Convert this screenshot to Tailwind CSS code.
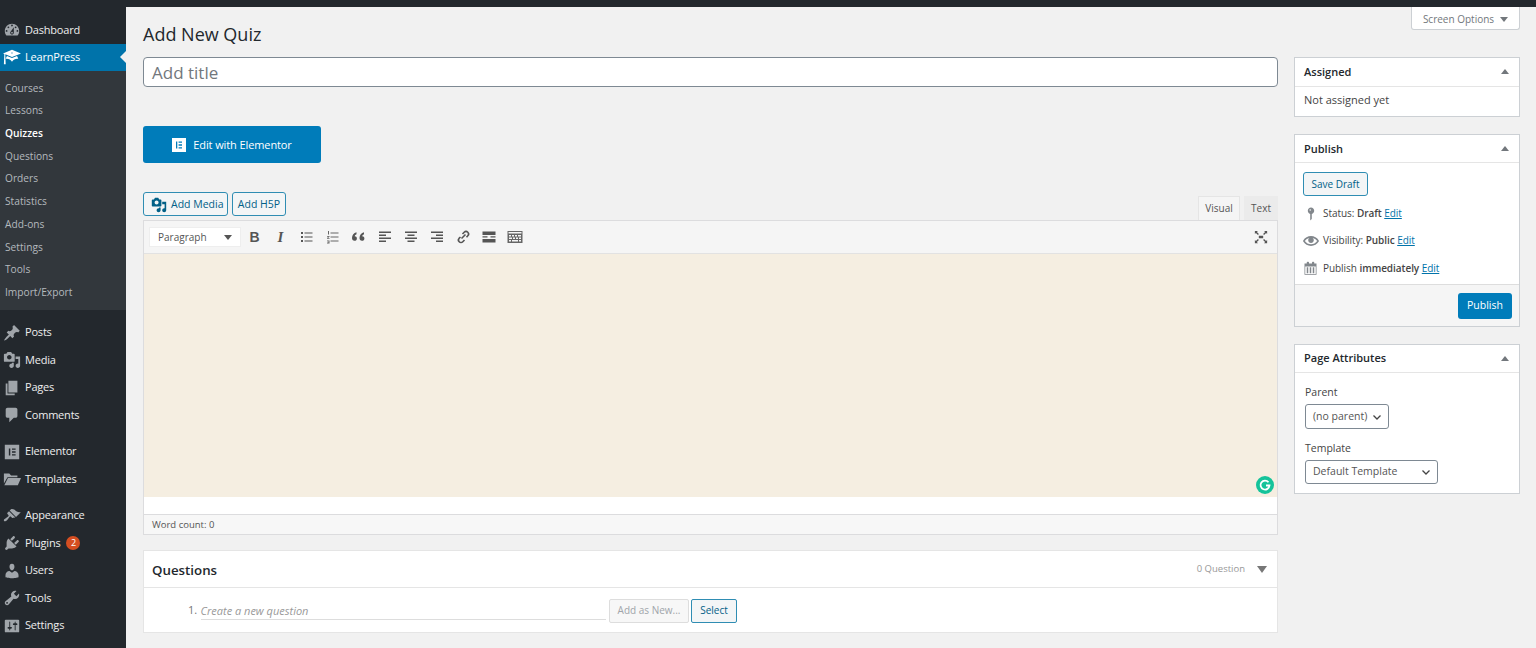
<!DOCTYPE html>
<html lang="en">
<head>
    <meta charset="UTF-8">
    <meta name="viewport" content="width=device-width, initial-scale=1.0">
    <title>Add New Quiz</title>
    <script src="https://cdn.jsdelivr.net/npm/@tailwindcss/browser@4"></script>
</head>
<body class="bg-[#f1f1f1] h-[648px] overflow-hidden font-['Open_Sans',sans-serif] text-[11px] text-[#444]">
    <!-- admin bar -->
    <div class="h-[7px] bg-[#23282d]"></div>

    <div class="flex h-[641px]">
        <!-- sidebar -->
        <nav class="w-[126px] shrink-0 bg-[#23282d] pt-[9.5px] text-[#eee] tracking-[-0.2px]">
            <a class="flex items-center h-[27px] pl-[3px] gap-[4px]">
                <svg class="w-[18px] h-[18px] fill-[#a0a5aa]" viewBox="0 0 20 20"><path d="M3.76 16h12.48c1.1-1.37 1.76-3.11 1.76-5 0-4.42-3.58-8-8-8s-8 3.58-8 8c0 1.89.66 3.63 1.76 5zM10 4c.55 0 1 .45 1 1s-.45 1-1 1-1-.45-1-1 .45-1 1-1zM6 6c.55 0 1 .45 1 1s-.45 1-1 1-1-.45-1-1 .45-1 1-1zm8 0c.55 0 1 .45 1 1s-.45 1-1 1-1-.45-1-1 .45-1 1-1zm-5.37 5.55L12 7v6c0 1.1-.9 2-2 2s-2-.9-2-2c0-.57.24-1.08.63-1.45zM4 10c.55 0 1 .45 1 1s-.45 1-1 1-1-.45-1-1 .45-1 1-1zm12 0c.55 0 1 .45 1 1s-.45 1-1 1-1-.45-1-1 .45-1 1-1zm-5 3c0-.55-.45-1-1-1s-1 .45-1 1 .45 1 1 1 1-.45 1-1z"/></svg>
                <span>Dashboard</span>
            </a>
            <a class="relative flex items-center h-[27px] pl-[3px] gap-[4px] bg-[#0073aa] text-white">
                <svg class="w-[18px] h-[18px] fill-white" viewBox="0 0 20 20"><path d="M10 10L2.54 7.02 3 18H1l.48-11.41L0 6l10-4 10 4zm0-5c-.55 0-1 .22-1 .5s.45.5 1 .5 1-.22 1-.5-.45-.5-1-.5zm0 6l5.57-2.23c.71.94 1.2 2.07 1.36 3.3-.3-.04-.61-.07-.93-.07-2.55 0-4.78 1.37-6 3.41C8.78 13.37 6.55 12 4 12c-.32 0-.63.03-.93.07.16-1.23.65-2.36 1.36-3.3z"/></svg>
                <span>LearnPress</span>
                <span class="absolute right-0 top-[7px] border-y-[6.5px] border-r-[6.5px] border-y-transparent border-r-[#f1f1f1]"></span>
            </a>
            <div class="bg-[#32373c] pt-[6.5px] pb-[6px] text-[10.2px] text-[#b4b9be] tracking-normal">
                <a class="flex items-center h-[22.7px] pl-[5px]">Courses</a>
                <a class="flex items-center h-[22.7px] pl-[5px]">Lessons</a>
                <a class="flex items-center h-[22.7px] pl-[5px] font-semibold text-white">Quizzes</a>
                <a class="flex items-center h-[22.7px] pl-[5px]">Questions</a>
                <a class="flex items-center h-[22.7px] pl-[5px]">Orders</a>
                <a class="flex items-center h-[22.7px] pl-[5px]">Statistics</a>
                <a class="flex items-center h-[22.7px] pl-[5px]">Add-ons</a>
                <a class="flex items-center h-[22.7px] pl-[5px]">Settings</a>
                <a class="flex items-center h-[22.7px] pl-[5px]">Tools</a>
                <a class="flex items-center h-[22.7px] pl-[5px]">Import/Export</a>
            </div>
            <div class="mt-[9px]">
                <a class="flex items-center h-[27.5px] pl-[3px] gap-[4px]">
                    <svg class="w-[18px] h-[18px] fill-[#a0a5aa]" viewBox="0 0 20 20"><path d="M10.44 3.02l1.82-1.82 6.36 6.35-1.83 1.82c-1.05-.68-2.48-.57-3.41.36l-.75.75c-.92.93-1.04 2.35-.35 3.41l-1.83 1.82-2.41-2.41-2.8 2.79c-.42.42-3.38 2.71-3.8 2.29s1.86-3.39 2.28-3.81l2.79-2.79L4.1 9.36l1.83-1.82c1.05.69 2.48.57 3.4-.36l.75-.75c.93-.92 1.05-2.35.36-3.41z"/></svg>
                    <span>Posts</span>
                </a>
                <a class="flex items-center h-[27.5px] pl-[3px] gap-[4px]">
                    <svg class="w-[18px] h-[18px] fill-[#a0a5aa]" viewBox="0 0 20 20"><path d="M13 11V4c0-.55-.45-1-1-1h-1.67L9 1H5L3.67 3H2c-.55 0-1 .45-1 1v7c0 .55.45 1 1 1h10c.55 0 1-.45 1-1zM7 4.5c1.38 0 2.5 1.12 2.5 2.5S8.38 9.5 7 9.5 4.5 8.38 4.5 7 5.62 4.5 7 4.5zM14 6h5v10.5c0 1.38-1.12 2.5-2.5 2.5S14 17.88 14 16.5s1.12-2.5 2.5-2.5c.17 0 .34.02.5.05V9h-3V6zm-4 8.05V13h2v3.5c0 1.38-1.12 2.5-2.5 2.5S7 17.88 7 16.5 8.12 14 9.5 14c.17 0 .34.02.5.05z"/></svg>
                    <span>Media</span>
                </a>
                <a class="flex items-center h-[27.5px] pl-[3px] gap-[4px]">
                    <svg class="w-[18px] h-[18px] fill-[#a0a5aa]" viewBox="0 0 20 20"><path d="M6 15V2h10v13H6zm-1 1h8v2H3V5h2v11z"/></svg>
                    <span>Pages</span>
                </a>
                <a class="flex items-center h-[27.5px] pl-[3px] gap-[4px]">
                    <svg class="w-[18px] h-[18px] fill-[#a0a5aa]" viewBox="0 0 20 20"><path d="M5 2h9c1.1 0 2 .9 2 2v7c0 1.1-.9 2-2 2h-2l-5 5v-5H5c-1.1 0-2-.9-2-2V4c0-1.1.9-2 2-2z"/></svg>
                    <span>Comments</span>
                </a>
            </div>
            <div class="mt-[9px]">
                <a class="flex items-center h-[27.5px] pl-[3px] gap-[4px]">
                    <svg class="w-[18px] h-[18px] fill-[#a0a5aa]" viewBox="0 0 20 20"><path fill-rule="evenodd" d="M2 2h16v16H2zM6.5 6v8h1.6V6zM10 6v1.600h4V6zM10 9.200v1.600h4V9.200zM10 12.400V14h4v-1.600z"/></svg>
                    <span>Elementor</span>
                </a>
                <a class="flex items-center h-[27.5px] pl-[3px] gap-[4px]">
                    <svg class="w-[18px] h-[18px] fill-[#a0a5aa]" viewBox="0 0 20 20"><path d="M1 4h6l2 2h7v2H5L1 15zM5.500 9H20l-3.500 8H1.500z"/></svg>
                    <span>Templates</span>
                </a>
            </div>
            <div class="mt-[9px]">
                <a class="flex items-center h-[27.5px] pl-[3px] gap-[4px]">
                    <svg class="w-[18px] h-[18px] fill-[#a0a5aa]" viewBox="0 0 20 20"><path d="M14.48 11.06L7.41 3.99l1.5-1.5c.5-.56 2.3-.47 3.51.32 1.21.8 1.43 1.28 2.91 2.1 1.18.64 2.45 1.26 4.45.85zm-.71.71L6.7 4.7 4.93 6.47c-.39.39-.39 1.02 0 1.41l1.06 1.06c.39.39.39 1.03 0 1.42-.6.6-1.43 1.11-2.21 1.69-.35.26-.7.53-1.01.84C1.43 13.23.4 14.85 1.19 15.64c.79.79 2.41-.24 3.75-1.58.31-.31.58-.66.84-1.01.58-.78 1.09-1.61 1.69-2.21.39-.39 1.02-.39 1.41 0l1.06 1.06c.39.39 1.02.39 1.41 0z"/></svg>
                    <span>Appearance</span>
                </a>
                <a class="flex items-center h-[27.5px] pl-[3px] gap-[4px]">
                    <svg class="w-[18px] h-[18px] fill-[#a0a5aa]" viewBox="0 0 20 20"><path d="M13.11 4.36L9.87 7.6 8 5.73l3.24-3.24c.35-.34 1.05-.2 1.56.32.52.51.66 1.21.31 1.55zm-8 1.77l.91-1.12 9.01 9.01-1.19.84c-.71.71-2.63 1.16-3.82 1.16H6.14L4.9 17.26c-.59.59-1.54.59-2.12 0-.59-.58-.59-1.53 0-2.12l1.24-1.24v-3.88c0-1.13.4-3.19 1.09-3.89zm7.26 3.97l3.24-3.24c.34-.35 1.04-.21 1.55.31.52.51.66 1.21.31 1.55l-3.24 3.25z"/></svg>
                    <span>Plugins</span>
                    <span class="flex items-center justify-center w-[14px] h-[14px] ml-[2px] rounded-full bg-[#d54e21] text-white text-[9px]">2</span>
                </a>
                <a class="flex items-center h-[27.5px] pl-[3px] gap-[4px]">
                    <svg class="w-[18px] h-[18px] fill-[#a0a5aa]" viewBox="0 0 20 20"><path d="M10 9.25c-2.27 0-2.73-3.44-2.73-3.44C7 4.02 7.82 2 9.97 2c2.16 0 2.98 2.02 2.71 3.81 0 0-.41 3.44-2.68 3.44zm0 2.57L12.72 10c2.39 0 4.52 2.33 4.52 4.53v2.49s-3.65 1.13-7.24 1.13c-3.65 0-7.24-1.13-7.24-1.13v-2.49c0-2.25 1.94-4.48 4.47-4.48z"/></svg>
                    <span>Users</span>
                </a>
                <a class="flex items-center h-[27.5px] pl-[3px] gap-[4px]">
                    <svg class="w-[18px] h-[18px] fill-[#a0a5aa]" viewBox="0 0 20 20"><path d="M16.68 9.77c-1.34 1.34-3.3 1.67-4.95.99l-5.41 6.52c-.99.99-2.59.99-3.58 0s-.99-2.59 0-3.57l6.52-5.42c-.68-1.65-.35-3.61.99-4.95 1.28-1.28 3.12-1.62 4.72-1.06l-2.89 2.89 2.82 2.82 2.86-2.87c.53 1.58.18 3.39-1.08 4.65zM3.81 16.21c.4.39 1.04.39 1.43 0 .4-.4.4-1.04 0-1.43-.39-.4-1.03-.4-1.43 0-.39.39-.39 1.03 0 1.43z"/></svg>
                    <span>Tools</span>
                </a>
                <a class="flex items-center h-[27.5px] pl-[3px] gap-[4px]">
                    <svg class="w-[18px] h-[18px] fill-[#a0a5aa]" viewBox="0 0 20 20"><path d="M18 16V4c0-.55-.45-1-1-1H3c-.55 0-1 .45-1 1v12c0 .55.45 1 1 1h14c.55 0 1-.45 1-1zM8 11h1c.55 0 1 .45 1 1s-.45 1-1 1H8v1.5c0 .28-.22.5-.5.5s-.5-.22-.5-.5V13H6c-.55 0-1-.45-1-1s.45-1 1-1h1V5.5c0-.28.22-.5.5-.5s.5.22.5.5V11zm5-2h-1c-.55 0-1-.45-1-1s.45-1 1-1h1V5.5c0-.28.22-.5.5-.5s.5.22.5.5V7h1c.55 0 1 .45 1 1s-.45 1-1 1h-1v5.5c0 .28-.22.5-.5.5s-.5-.22-.5-.5V9z"/></svg>
                    <span>Settings</span>
                </a>
            </div>
        </nav>

        <!-- main -->
        <main class="flex-1 flex gap-[16px] pl-[17px] pr-[16px]">
            <!-- left column -->
            <div class="w-[1135px] shrink-0">
                <h1 class="h-[50px] pt-[15px] text-[18px] leading-[25px] text-[#23282d]">Add New Quiz</h1>
                <div class="flex items-center h-[30px] pl-[8px] pt-[1px] bg-white border border-[#7e8993] rounded-[4px] text-[17px] text-[#72777c]">Add title</div>

                <button class="flex items-center justify-center gap-[7px] w-[178px] h-[37px] mt-[39px] pt-[1px] bg-[#007cba] rounded-[3px] text-white text-[11px] tracking-[-0.1px]">
                    <svg class="w-[14px] h-[14px]" viewBox="0 0 14 14"><path fill="#fff" fill-rule="evenodd" d="M0 0h14v14H0zM4 3.500v7h1.300v-7zM6.600 3.500v1.300H10V3.500zM6.600 6.300v1.400H10V6.300zM6.600 9.200v1.300H10V9.200z"/></svg>
                    Edit with Elementor
                </button>

                <div class="flex items-end justify-between h-[28px] mt-[29px]">
                    <div class="flex gap-[4px] mb-[4px] text-[#016087] text-[10.5px]">
                        <button class="flex items-center gap-[4px] w-[85px] h-[24px] pl-[7px] pt-[1px] bg-[#f3f5f6] border border-[#2f8db3] rounded-[3px]">
                            <svg class="w-[16px] h-[16px] fill-[#016087]" viewBox="0 0 20 20"><path d="M13 11V4c0-.55-.45-1-1-1h-1.67L9 1H5L3.67 3H2c-.55 0-1 .45-1 1v7c0 .55.45 1 1 1h10c.55 0 1-.45 1-1zM7 4.5c1.38 0 2.5 1.12 2.5 2.5S8.38 9.5 7 9.5 4.5 8.38 4.5 7 5.62 4.5 7 4.5zM14 6h5v10.5c0 1.38-1.12 2.5-2.5 2.5S14 17.88 14 16.5s1.12-2.5 2.5-2.5c.17 0 .34.02.5.05V9h-3V6zm-4 8.05V13h2v3.5c0 1.38-1.12 2.5-2.5 2.5S7 17.88 7 16.5 8.12 14 9.5 14c.17 0 .34.02.5.05z"/></svg>
                            Add Media
                        </button>
                        <button class="w-[54px] h-[24px] pt-[1px] bg-[#f3f5f6] border border-[#2f8db3] rounded-[3px]">Add H5P</button>
                    </div>
                    <div class="flex gap-[4px] text-[10px] text-[#555]">
                        <span class="flex items-center justify-center w-[42px] h-[24px] bg-[#f5f5f5] border border-b-0 border-[#e5e5e5]">Visual</span>
                        <span class="flex items-center justify-center w-[34px] h-[24px] bg-[#ebebeb]">Text</span>
                    </div>
                </div>

                <!-- editor -->
                <div class="border border-[#dcdcde]">
                    <div class="flex items-center justify-between h-[33px] pl-[5px] pr-[9px] bg-[#f5f5f5] border-b border-[#e2e2e2]">
                        <div class="flex items-center">
                            <div class="flex items-center justify-between w-[92px] h-[20px] px-[8px] mr-[0.5px] bg-white border border-[#eee] text-[10px] text-[#555]">
                                Paragraph
                                <span class="border-x-[4px] border-t-[5px] border-x-transparent border-t-[#555]"></span>
                            </div>
                            <div class="flex items-center text-[#555]">
                                <span class="w-[26px] text-center font-['Liberation_Sans',sans-serif] text-[14px] font-bold">B</span>
                                <span class="w-[26px] text-center font-['Liberation_Serif',serif] text-[15px] font-bold italic">I</span>
                                <svg class="w-[26px] h-[16px] fill-[#555]" viewBox="0 0 26 16"><path d="M7 3h2v2H7zM7 7h2v2H7zM7 11h2v2H7zM10.500 3.500h8v1h-8zM10.500 7.500h8v1h-8zM10.500 11.500h8v1h-8z"/></svg>
                                <svg class="w-[26px] h-[16px] fill-[#666]" viewBox="0 0 26 16"><path d="M8 2h1v3.500H8zM7 7h2.500v.8l-1.500 1.200h1.500v.8H7V9l1.500-1.200H7zM7 11.500h2.500v3H7v-.7h1.700v-.4H7.500v-.6h1.200v-.5H7zM10.500 3.500h8v1h-8zM10.500 7.500h8v1h-8zM10.500 11.500h8v1h-8z"/></svg>
                                <svg class="w-[26px] h-[16px] fill-[#555]" viewBox="0 0 26 16"><path d="M6 9c0-3 1.800-5 4.500-5.800v2c-1.100.5-1.700 1.100-1.800 2 1.300 0 2.200.9 2.200 2.200 0 1.400-1 2.300-2.400 2.300C6.900 11.700 6 10.600 6 9zM13.500 9c0-3 1.800-5 4.500-5.800v2c-1.100.5-1.700 1.100-1.800 2 1.300 0 2.200.9 2.200 2.200 0 1.400-1 2.300-2.400 2.300-1.600 0-2.500-1.100-2.500-2.700z"/></svg>
                                <svg class="w-[26px] h-[16px] fill-[#555]" viewBox="0 0 26 16"><path d="M7 2.500h12v1.500H7zM7 5.500h7V7H7zM7 8.500h12V10H7zM7 11.500h7V13H7z"/></svg>
                                <svg class="w-[26px] h-[16px] fill-[#555]" viewBox="0 0 26 16"><path d="M7 2.500h12v1.500H7zM9.500 5.500h7V7h-7zM7 8.500h12V10H7zM9.500 11.500h7V13h-7z"/></svg>
                                <svg class="w-[26px] h-[16px] fill-[#555]" viewBox="0 0 26 16"><path d="M7 2.500h12v1.500H7zM12 5.500h7V7h-7zM7 8.500h12V10H7zM12 11.500h7V13h-7z"/></svg>
                                <svg class="w-[26px] h-[16px] fill-none stroke-[#555] stroke-[1.600]" viewBox="0 0 26 16"><path d="M11.500 9.500l4-4M12.500 5l1.700-1.700c1-1 2.600-1 3.600 0s1 2.500 0 3.500L16.500 8.200M14.500 11l-1.700 1.700c-1 1-2.600 1-3.600 0s-1-2.500 0-3.500L10.500 8"/></svg>
                                <svg class="w-[26px] h-[16px] fill-[#555]" viewBox="0 0 26 16"><path d="M6.500 2.500h13V6h-13zM6.500 7.300h5v1.200h-5zM14.500 7.300h5v1.200h-5zM6.500 10h13v3.500h-13z"/></svg>
                                <svg class="w-[26px] h-[16px] fill-[#666]" viewBox="0 0 26 16"><path fill-rule="evenodd" d="M5.500 2h15v12h-15zM6.500 3v1.500h13V3zM7 6v1.500h2V6zM10 6v1.500h2V6zM13 6v1.500h2V6zM16 6v1.500h3V6zM7 8.500V10h3V8.500zM11 8.500V10h2V8.500zM14 8.500V10h2V8.500zM17 8.500V10h2V8.500zM7 11v1.500h2V11zM10 11v1.500h6V11zM17 11v1.500h2V11z"/></svg>
                            </div>
                        </div>
                        <svg class="w-[14px] h-[14px] fill-[#555]" viewBox="0 0 16 16"><path d="M1 1h3.500L3.300 2.200 5.600 4.500 4.500 5.600 2.200 3.300 1 4.500zM15 1v3.500l-1.200-1.200-2.300 2.300-1.100-1.100 2.300-2.300L11.500 1zM1 15v-3.500l1.200 1.200 2.300-2.300 1.100 1.100-2.300 2.300L4.500 15zM15 15h-3.500l1.200-1.200-2.300-2.300 1.100-1.100 2.300 2.300 1.200-1.200zM5.500 6.500h5v3h-5z"/></svg>
                    </div>
                    <div class="relative h-[243px] bg-[#f5eee1]">
                        <svg class="absolute right-[3px] bottom-[3px] w-[18px] h-[18px]" viewBox="0 0 18 18"><circle cx="9" cy="9" r="9" fill="#15c39a"/><path d="M12.500 6.200A4.500 4.500 0 1 0 13.500 9.500H10" fill="none" stroke="#fff" stroke-width="1.800"/></svg>
                    </div>
                    <div class="h-[17px] bg-white"></div>
                </div>
                <div class="flex items-center h-[19.5px] pl-[8px] pt-[1px] bg-[#f7f7f7] border border-t-0 border-[#dcdcde] text-[9.5px] text-[#555]">Word count: 0</div>

                <!-- questions -->
                <section class="mt-[15.5px] bg-white border border-[#e5e5e5]">
                    <div class="flex items-center justify-between h-[37px] pl-[8px] pr-[10px] border-b border-[#e5e5e5]">
                        <h2 class="pt-[4px] text-[13.3px] font-semibold text-[#23282d]">Questions</h2>
                        <div class="flex items-center gap-[12px] pt-[1px] text-[9.5px] text-[#999]">
                            0 Question
                            <span class="border-x-[5px] border-t-[7px] border-x-transparent border-t-[#777]"></span>
                        </div>
                    </div>
                    <div class="flex items-center h-[44px] pt-[1px] pl-[44px]">
                        <span class="w-[12.5px] text-[#777]">1.</span>
                        <div class="flex items-center w-[405px] h-[18px] pt-[2px] mr-[3.5px] border-b border-[#ddd] italic text-[11px] text-[#999]">Create a new question</div>
                        <button class="w-[80px] h-[24px] bg-[#f7f7f7] border border-[#ddd] rounded-[2px] text-[10px] text-[#a0a5aa]">Add as New...</button>
                        <button class="w-[46px] h-[24px] ml-[2px] bg-[#f3f5f6] border border-[#2f8db3] rounded-[2px] text-[10px] text-[#016087]">Select</button>
                    </div>
                </section>
            </div>

            <!-- right column -->
            <aside class="w-[226px] shrink-0">
                <button class="flex items-center justify-center gap-[6px] w-[109px] h-[23px] pt-[2px] ml-auto bg-white border border-t-0 border-[#ccd0d4] rounded-b-[3px] text-[10px] text-[#72777c]">
                    Screen Options
                    <span class="border-x-[4px] border-t-[5px] border-x-transparent border-t-[#72777c]"></span>
                </button>

                <section class="mt-[26.5px] bg-white border border-[#ccd0d4]">
                    <div class="flex items-center justify-between h-[29px] pl-[9px] pr-[10px] border-b border-[#e5e5e5]">
                        <h2 class="pt-[1px] font-semibold text-[#23282d]">Assigned</h2>
                        <span class="border-x-[4px] border-b-[5px] border-x-transparent border-b-[#72777c]"></span>
                    </div>
                    <div class="flex items-center h-[29px] pb-[2px] pl-[9px] text-[#444]">Not assigned yet</div>
                </section>

                <section class="mt-[17px] bg-white border border-[#ccd0d4]">
                    <div class="flex items-center justify-between h-[28.5px] pl-[9px] pr-[10px] border-b border-[#e5e5e5]">
                        <h2 class="pt-[1px] font-semibold text-[#23282d]">Publish</h2>
                        <span class="border-x-[4px] border-b-[5px] border-x-transparent border-b-[#72777c]"></span>
                    </div>
                    <div class="h-[120.5px] pt-[9px] pl-[8px]">
                        <button class="w-[65px] h-[24px] bg-[#f3f5f6] border border-[#2f8db3] rounded-[3px] text-[10px] text-[#016087]">Save Draft</button>
                        <div class="flex items-center h-[27.5px] mt-[4px] gap-[4px] text-[10px] tracking-[-0.05px]">
                            <svg class="w-[16px] h-[16px] fill-[#82878c]" viewBox="0 0 20 20"><path d="M14 6c0 1.860-1.280 3.410-3 3.860V16c0 1-2 2-2 2V9.860c-1.720-.45-3-2-3-3.860 0-2.210 1.790-4 4-4s4 1.790 4 4zM8 5c0 .55.45 1 1 1s1-.45 1-1-.45-1-1-1-1 .45-1 1z"/></svg>
                            <span>Status: <b class="font-semibold">Draft</b> <a class="text-[#0073aa] underline">Edit</a></span>
                        </div>
                        <div class="flex items-center h-[27.5px] gap-[4px] text-[10px] tracking-[-0.05px] -mt-[0.5px]">
                            <svg class="w-[16px] h-[16px] fill-[#82878c]" viewBox="0 0 20 20"><path d="M19.700 9.400C17.700 6 14 3.900 10 3.900S2.300 6 .3 9.400L0 10l.3.6c2 3.400 5.700 5.500 9.700 5.500s7.700-2.100 9.700-5.500l.3-.6-.3-.6zM10 14.100c-3.100 0-6-1.600-7.700-4.100C3.600 8 5.700 6.600 8 6.100c-.9.6-1.500 1.700-1.500 2.900 0 1.900 1.600 3.500 3.500 3.500s3.500-1.600 3.500-3.500c0-1.200-.6-2.300-1.500-2.900 2.300.5 4.400 1.900 5.700 3.900-1.700 2.500-4.600 4.100-7.700 4.100z"/></svg>
                            <span>Visibility: <b class="font-semibold">Public</b> <a class="text-[#0073aa] underline">Edit</a></span>
                        </div>
                        <div class="flex items-center h-[27.5px] gap-[5px] text-[10px] tracking-[-0.05px]">
                            <svg class="w-[15px] h-[16px] fill-[#82878c]" viewBox="0 0 20 20"><path d="M15 4h3v15H2V4h3V3c0-.41.15-.76.44-1.060.29-.29.65-.44 1.060-.44s.77.15 1.060.44c.29.3.44.65.44 1.060v1h4V3c0-.41.15-.76.44-1.060.29-.29.65-.44 1.060-.44s.77.15 1.060.44c.29.3.44.65.44 1.060v1zM3 8v10h14V8zM5 9h2v8H5zM9 9h2v8H9zM13 9h2v8h-2z"/></svg>
                            <span>Publish <b class="font-semibold">immediately</b> <a class="text-[#0073aa] underline">Edit</a></span>
                        </div>
                    </div>
                    <div class="flex justify-end h-[42px] pt-[8px] pr-[7px] bg-[#f5f5f5] border-t border-[#ddd]">
                        <button class="w-[54px] h-[26px] bg-[#007cba] rounded-[3px] text-white text-[10.5px]">Publish</button>
                    </div>
                </section>

                <section class="mt-[17px] bg-white border border-[#ccd0d4]">
                    <div class="flex items-center justify-between h-[28px] pl-[9px] pr-[10px] border-b border-[#e5e5e5]">
                        <h2 class="font-semibold text-[#23282d]">Page Attributes</h2>
                        <span class="border-x-[4px] border-b-[5px] border-x-transparent border-b-[#72777c]"></span>
                    </div>
                    <div class="h-[120px] pl-[10px] text-[10.5px]">
                        <p class="pt-[12.5px] leading-[14px] text-[#444]">Parent</p>
                        <div class="flex items-center justify-between w-[84px] h-[25px] mt-[5px] px-[7px] pt-[1px] border border-[#7e8993] rounded-[3px] text-[#555]">
                            (no parent)
                            <svg class="w-[8px] h-[5px] stroke-[#444] fill-none stroke-[1.300]" viewBox="0 0 8 5"><path d="M.5.5L4 4 7.500.5"/></svg>
                        </div>
                        <p class="pt-[11.5px] leading-[14px] text-[#444]">Template</p>
                        <div class="flex items-center justify-between w-[133px] h-[24px] mt-[5px] px-[7px] pt-[1px] border border-[#7e8993] rounded-[3px] text-[#555]">
                            Default Template
                            <svg class="w-[8px] h-[5px] stroke-[#444] fill-none stroke-[1.300]" viewBox="0 0 8 5"><path d="M.5.5L4 4 7.500.5"/></svg>
                        </div>
                    </div>
                </section>
            </aside>
        </main>
    </div>
</body>
</html>
